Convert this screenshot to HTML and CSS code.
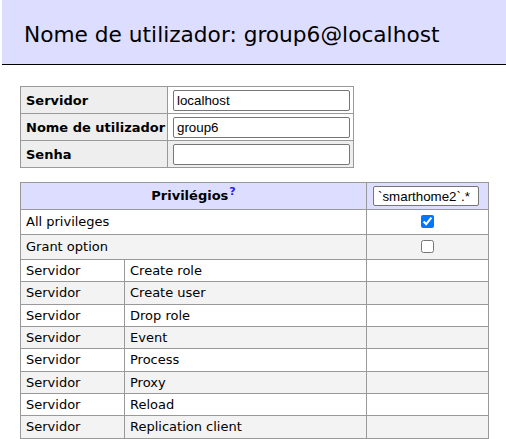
FILE: index.html
```html
<!DOCTYPE html>
<html lang="pt">
<head>
<meta charset="utf-8">
<title>Nome de utilizador</title>
<link rel="stylesheet" href="styles.css">
</head>
<body>
<h2 class="page-title">Nome de utilizador: group6@localhost</h2>
<main class="content">
  <table class="login-table">
    <colgroup><col class="c-label"><col class="c-value"></colgroup>
    <tr>
      <th>Servidor</th>
      <td><input class="text-input" type="text" value="localhost"></td>
    </tr>
    <tr>
      <th>Nome de utilizador</th>
      <td><input class="text-input" type="text" value="group6"></td>
    </tr>
    <tr class="alt">
      <th>Senha</th>
      <td><input class="text-input" type="password" value=""></td>
    </tr>
  </table>

  <table class="priv-table">
    <colgroup><col class="c-scope"><col class="c-name"><col class="c-db"></colgroup>
    <tr class="head">
      <th colspan="2">Privilégios<sup><a href="#" class="help">?</a></sup></th>
      <td><input class="db-input" type="text" value="`smarthome2`.*"></td>
    </tr>
    <tr>
      <td colspan="2">All privileges</td>
      <td class="check"><input type="checkbox" checked></td>
    </tr>
    <tr class="alt">
      <td colspan="2">Grant option</td>
      <td class="check"><input type="checkbox"></td>
    </tr>
    <tr><td>Servidor</td><td>Create role</td><td></td></tr>
    <tr class="alt"><td>Servidor</td><td>Create user</td><td></td></tr>
    <tr><td>Servidor</td><td>Drop role</td><td></td></tr>
    <tr class="alt"><td>Servidor</td><td>Event</td><td></td></tr>
    <tr><td>Servidor</td><td>Process</td><td></td></tr>
    <tr class="alt"><td>Servidor</td><td>Proxy</td><td></td></tr>
    <tr><td>Servidor</td><td>Reload</td><td></td></tr>
    <tr class="alt"><td>Servidor</td><td>Replication client</td><td></td></tr>
  </table>
</main>
</body>
</html>
```

FILE: styles.css
```css
html, body {
  margin: 0;
  padding: 0;
  background: #fff;
}
body {
  font-family: "DejaVu Sans", Verdana, sans-serif;
  font-size: 13px;
  color: #000;
}
.page-title {
  margin: 0 0 0 2px;
  height: 65px;
  box-sizing: border-box;
  padding: 22px 0 0 22px;
  background: #ddf;
  border-bottom: 1px solid #000;
  font-weight: normal;
  font-size: 21.7px;
  line-height: 26px;
}
.content {
  padding: 21px 20px 0 20px;
}
table {
  border-collapse: collapse;
  table-layout: fixed;
}
.login-table {
  width: 333px;
}
.login-table .c-label { width: 147px; }
.login-table .c-value { width: 186px; }
.login-table th,
.login-table td {
  border: 1px solid #999;
  padding: 3px 4px 2px 5px;
  text-align: left;
  line-height: 16px;
}
.login-table th {
  background: #eee;
  font-weight: bold;
  white-space: nowrap;
}
.login-table tr.alt td {
  background: #eee;
}
.text-input {
  display: block;
  box-sizing: border-box;
  width: 177px;
  height: 21px;
  margin: 0;
  padding: 1px 3px;
  border: 1px solid #767676;
  border-radius: 2px;
  font-family: "Liberation Sans", Arial, sans-serif;
  font-size: 13.333px;
  color: #000;
  background: #fff;
}
.priv-table {
  margin-top: 14px;
  width: 468px;
}
.priv-table .c-scope { width: 104px; }
.priv-table .c-name { width: 242px; }
.priv-table .c-db { width: 122px; }
.priv-table th,
.priv-table td {
  border: 1px solid #999;
  padding: 3px 5px;
  line-height: 15.33px;
  text-align: left;
  white-space: nowrap;
}
.priv-table tr.head th,
.priv-table tr.head td {
  background: #ddf;
}
.priv-table tr.head th {
  text-align: center;
  font-weight: bold;
}
.priv-table tr.alt td {
  background: #f3f3f3;
}
.help {
  color: #2121e8;
  text-decoration: none;
  font-size: 11px;
  margin-left: 1px;
}
sup {
  line-height: 0;
}
.db-input {
  display: block;
  box-sizing: border-box;
  width: 106px;
  height: 20px;
  margin: 0 0 0 1px;
  padding: 1px 4px;
  border: 1px solid #767676;
  border-radius: 2px;
  font-family: "Liberation Sans", Arial, sans-serif;
  font-size: 13.333px;
  color: #000;
  background: #fff;
}
.priv-table td.check {
  text-align: center;
}
.check input {
  display: block;
  width: 13px;
  height: 13px;
  margin: 2px auto 3px;
}
```
